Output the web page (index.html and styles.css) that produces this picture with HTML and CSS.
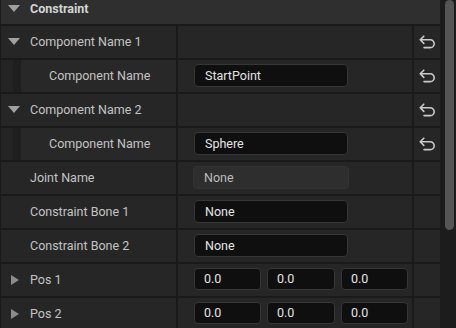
FILE: index.html
```html
<!DOCTYPE html>
<html>
<head>
<meta charset="utf-8">
<link rel="stylesheet" href="styles.css">
</head>
<body>
<div class="frame">
  <div class="panel">
    <div class="header">
      <span class="tri-down"></span>
      <span class="title">Constraint</span>
    </div>

    <div class="row">
      <div class="label"><span class="tri-down"></span><span>Component Name 1</span></div>
      <div class="value"></div>
      <div class="reset"><svg viewBox="0 0 17 14" width="17" height="14"><path d="M4.8 1.2 L1.2 4.8 L4.8 8.4 M1.2 4.8 H11.3 A3.9 3.9 0 0 1 11.3 12.6 H5" fill="none" stroke="#cacaca" stroke-width="1.6" stroke-linecap="round" stroke-linejoin="round"/></svg></div>
    </div>

    <div class="row">
      <div class="label child"><span class="indent"></span><span class="strip"></span><span class="child-text">Component Name</span></div>
      <div class="value"><div class="input">StartPoint</div></div>
      <div class="reset"><svg viewBox="0 0 17 14" width="17" height="14"><path d="M4.8 1.2 L1.2 4.8 L4.8 8.4 M1.2 4.8 H11.3 A3.9 3.9 0 0 1 11.3 12.6 H5" fill="none" stroke="#cacaca" stroke-width="1.6" stroke-linecap="round" stroke-linejoin="round"/></svg></div>
    </div>

    <div class="row">
      <div class="label"><span class="tri-down"></span><span>Component Name 2</span></div>
      <div class="value"></div>
      <div class="reset"><svg viewBox="0 0 17 14" width="17" height="14"><path d="M4.8 1.2 L1.2 4.8 L4.8 8.4 M1.2 4.8 H11.3 A3.9 3.9 0 0 1 11.3 12.6 H5" fill="none" stroke="#cacaca" stroke-width="1.6" stroke-linecap="round" stroke-linejoin="round"/></svg></div>
    </div>

    <div class="row">
      <div class="label child"><span class="indent"></span><span class="strip"></span><span class="child-text">Component Name</span></div>
      <div class="value"><div class="input">Sphere</div></div>
      <div class="reset"><svg viewBox="0 0 17 14" width="17" height="14"><path d="M4.8 1.2 L1.2 4.8 L4.8 8.4 M1.2 4.8 H11.3 A3.9 3.9 0 0 1 11.3 12.6 H5" fill="none" stroke="#cacaca" stroke-width="1.6" stroke-linecap="round" stroke-linejoin="round"/></svg></div>
    </div>

    <div class="row">
      <div class="label"><span class="no-tri"></span><span>Joint Name</span></div>
      <div class="value"><div class="input disabled">None</div></div>
      <div class="reset"></div>
    </div>

    <div class="row">
      <div class="label"><span class="no-tri"></span><span>Constraint Bone 1</span></div>
      <div class="value"><div class="input">None</div></div>
      <div class="reset"></div>
    </div>

    <div class="row">
      <div class="label"><span class="no-tri"></span><span>Constraint Bone 2</span></div>
      <div class="value"><div class="input">None</div></div>
      <div class="reset"></div>
    </div>

    <div class="row">
      <div class="label"><span class="tri-right"></span><span>Pos 1</span></div>
      <div class="value vec"><div class="num">0.0</div><div class="num">0.0</div><div class="num">0.0</div></div>
      <div class="reset"></div>
    </div>

    <div class="row">
      <div class="label"><span class="tri-right"></span><span>Pos 2</span></div>
      <div class="value vec"><div class="num">0.0</div><div class="num">0.0</div><div class="num">0.0</div></div>
      <div class="reset"></div>
    </div>
  </div>
  <div class="scrollbar"><div class="thumb"></div></div>
</div>
</body>
</html>
```

FILE: styles.css
```css
html, body {
  margin: 0;
  padding: 0;
  background: #1b1b1b;
  width: 456px;
  height: 328px;
  overflow: hidden;
}
body {
  font-family: Roboto, "Liberation Sans", sans-serif;
  font-size: 12.5px;
  color: #c4c4c4;
}
.frame {
  display: flex;
  height: 328px;
}
.panel {
  width: 439px;
  border-left: 1px solid #1a1a1a;
  display: flex;
  flex-direction: column;
  background: #1a1a1a;
  gap: 2px;
}
.header {
  height: 24px;
  flex: none;
  background: #2f2f2f;
  display: flex;
  align-items: flex-start;
  padding-left: 7px;
  box-sizing: border-box;
}
.header .tri-down {
  margin-top: 5px;
}
.title {
  font-weight: bold;
  color: #d4d4d4;
  line-height: 17px;
}
.row {
  height: 32px;
  flex: none;
  display: flex;
  gap: 2px;
}
.label {
  width: 175px;
  background: #262626;
  display: flex;
  align-items: center;
  padding-left: 7px;
  padding-bottom: 1px;
  box-sizing: border-box;
}
.label.child {
  padding-left: 0;
  padding-bottom: 0;
  align-items: stretch;
}
.indent {
  width: 12px;
  background: #242424;
}
.strip {
  width: 8px;
  background: #1f1f1f;
}
.child-text {
  flex: 1;
  background: #282828;
  display: flex;
  align-items: center;
  padding-left: 28px;
  padding-bottom: 1px;
}
.tri-down {
  width: 0;
  height: 0;
  border-left: 6px solid transparent;
  border-right: 6px solid transparent;
  border-top: 7px solid #a0a0a0;
  margin-right: 10px;
  flex: none;
}
.tri-right {
  width: 0;
  height: 0;
  border-top: 5.5px solid transparent;
  border-bottom: 5.5px solid transparent;
  border-left: 8px solid #8c8c8c;
  margin-left: 3px;
  margin-right: 11px;
  flex: none;
}
.no-tri {
  width: 22px;
  flex: none;
}
.value {
  width: 234px;
  background: #262626;
  display: flex;
  align-items: center;
  padding-left: 16px;
  padding-bottom: 2px;
  box-sizing: border-box;
}
.input {
  width: 154px;
  height: 23px;
  box-sizing: border-box;
  background: #0f0f0f;
  border: 1px solid #363636;
  border-radius: 4px;
  color: #e4e4e4;
  padding-left: 10px;
  line-height: 21px;
}
.input.disabled {
  background: #2e2e2e;
  border-color: #323232;
  color: #bdbdbd;
  width: 156px;
  margin-left: -1px;
}
.vec {
  gap: 6px;
}
.num {
  width: 67px;
  height: 22px;
  box-sizing: border-box;
  background: #0f0f0f;
  border: 1px solid #363636;
  border-radius: 4px;
  color: #e4e4e4;
  padding-left: 9px;
  line-height: 20px;
}
.vec .num:nth-child(2) { width: 68px; }
.reset {
  width: 26px;
  background: #262626;
  display: flex;
  align-items: center;
  justify-content: center;
  padding-bottom: 1px;
  box-sizing: border-box;
}
.scrollbar {
  width: 16px;
  background: #1c1c1c;
  display: flex;
  padding-left: 5px;
  box-sizing: border-box;
}
.thumb {
  width: 9px;
  height: 230px;
  background: #555555;
  border-radius: 5px;
}
```
